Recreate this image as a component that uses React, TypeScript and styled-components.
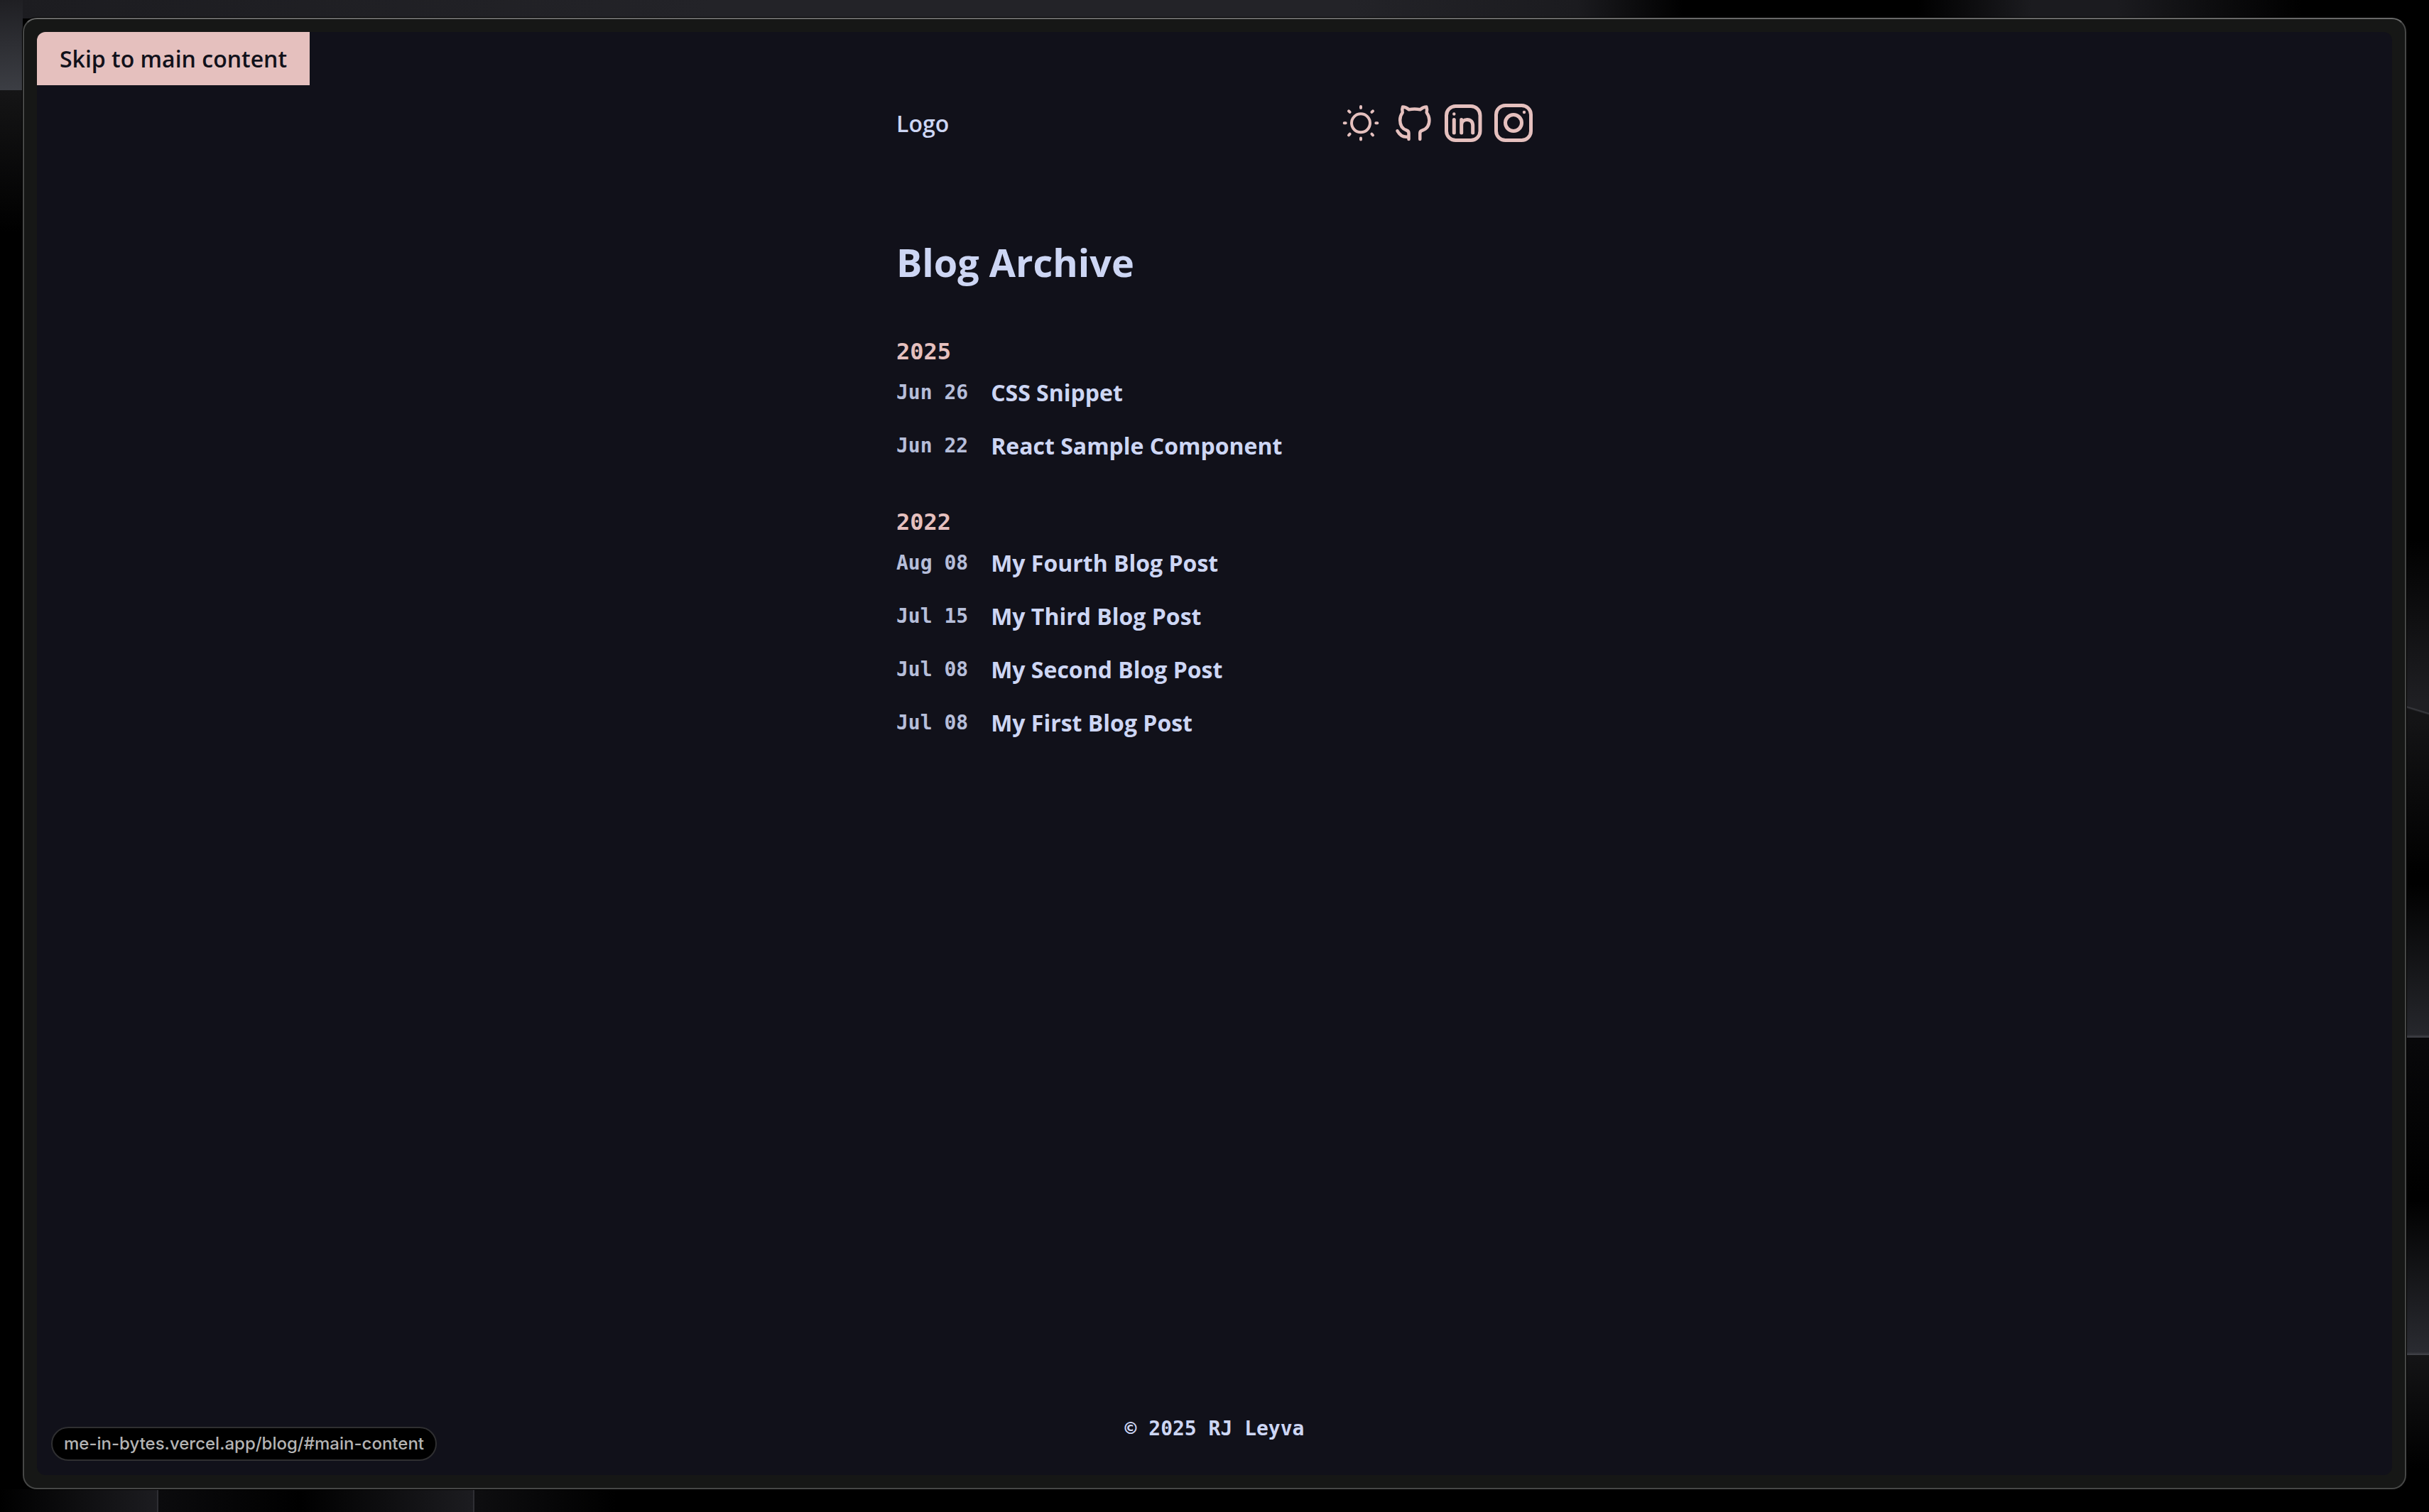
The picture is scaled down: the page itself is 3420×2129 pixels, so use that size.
import React from "react";
import styled, { createGlobalStyle } from "styled-components";

const sans = `"Open Sans", "Noto Sans", sans-serif`;
const mono = `"DejaVu Sans Mono", monospace`;
const rose = "#e5c0be";
const ink = "#11111a";
const text = "#cdd6f4";

const GlobalStyle = createGlobalStyle`
  *, *::before, *::after { box-sizing: border-box; }
  body { margin: 0; background: #000; }
`;

const Desktop = styled.div`
  display: flex;
  min-height: 100vh;
  padding: 25px 32px 32px;
  background:
    linear-gradient(#2e2e33, #2e2e33) 221px 100% / 2px 32px no-repeat,
    linear-gradient(#2e2e33, #2e2e33) 666px 100% / 2px 32px no-repeat,
    linear-gradient(90deg, #000 0, #1c1c20 222px) 0 100% / 222px 32px no-repeat,
    linear-gradient(90deg, #0b0b0d 0, #000 200px, #1c1c20 443px) 223px 100% / 443px 32px no-repeat,
    linear-gradient(90deg, #0e0e10 0, #000 200px) 668px 100% / 200px 32px no-repeat,
    linear-gradient(#1f1f23, #3c3e44) 0 0 / 32px 127px no-repeat,
    linear-gradient(#151516, #000) 0 127px / 32px 200px no-repeat,
    linear-gradient(197deg, #1f1f23 44%, #3a3b40 50%, #141416 58%) 100% 990px / 32px 20px no-repeat,
    linear-gradient(#000, #1f1f23) 100% 760px / 32px 230px no-repeat,
    linear-gradient(#141416, #000) 100% 1010px / 32px 220px no-repeat,
    linear-gradient(#000, #26272c 98%, #45464c) 100% 1245px / 32px 216px no-repeat,
    linear-gradient(#08080a, #000) 100% 1461px / 32px 220px no-repeat,
    linear-gradient(#000, #2a2b31 98%, #45464c) 100% 1690px / 32px 218px no-repeat,
    linear-gradient(#141416, #000) 100% 1908px / 32px 160px no-repeat,
    linear-gradient(90deg, #1c1c20 0, #232328 1000px, #232328 1900px, #1b1b1f 2220px, #000 2370px, #000 2700px, #1b1b1f 2860px, #1b1b1f 2980px, #000 3240px) 0 0 / 100% 26px no-repeat,
    #000;
`;

const BrowserWindow = styled.div`
  position: relative;
  display: flex;
  flex: 1;
  padding: 18px;
  border: 2px solid #464746;
  border-top-color: #686868;
  border-radius: 20px;
  background: #161716;
  box-shadow: 0 0 0 1px #000;
`;

const Page = styled.div`
  position: relative;
  display: flex;
  flex: 1;
  flex-direction: column;
  align-items: center;
  overflow: hidden;
  border-radius: 12px;
  background: ${ink};
  color: ${text};
  font-family: ${sans};
  font-size: 32px;
  line-height: 43px;
`;

const SkipLink = styled.a`
  position: absolute;
  top: 0;
  left: 0;
  padding: 16px 32px;
  background: ${rose};
  color: ${ink};
  font-weight: 600;
  text-decoration: none;
`;

const Column = styled.div`
  display: flex;
  flex: 1;
  flex-direction: column;
  width: 100%;
  max-width: 896px;
`;

const Header = styled.header`
  display: flex;
  align-items: center;
  justify-content: space-between;
  margin-top: 96px;
`;

const LogoLink = styled.a`
  color: inherit;
  font-weight: 600;
  text-decoration: none;
`;

const Actions = styled.nav`
  display: flex;
  align-items: center;
  gap: 14px;
  color: ${rose};
`;

const iconControl = `
  display: flex;
  padding: 0;
  border: 0;
  background: none;
  color: inherit;
`;

const IconButton = styled.button`${iconControl}`;
const IconLink = styled.a`${iconControl}`;

const Glyph = styled.svg`
  width: 56px;
  height: 64px;
  overflow: visible;
  fill: none;
  stroke: currentColor;
  stroke-linecap: round;
  stroke-linejoin: round;
`;

const Main = styled.main`
  display: flex;
  flex: 1;
  flex-direction: column;
`;

const Title = styled.h1`
  margin: 126px 0 68px;
  font-size: 54px;
  line-height: 76px;
  font-weight: 700;
`;

const YearGroup = styled.section`
  margin-bottom: 50px;
`;

const Year = styled.h2`
  margin: 0;
  color: ${rose};
  font: 700 32px/40px ${mono};
`;

const Posts = styled.ul`
  margin: 0;
  padding: 0;
  list-style: none;
`;

const Post = styled.li`
  display: flex;
  align-items: center;
  gap: 32px;
  height: 75px;
`;

const PostDate = styled.time`
  opacity: 0.88;
  font: 700 28px/43px ${mono};
  white-space: pre;
`;

const PostLink = styled.a`
  color: inherit;
  font-weight: 700;
  text-decoration: none;
`;

const Footer = styled.footer`
  margin-bottom: 44px;
  font: 700 28px/43px ${mono};
  text-align: center;
`;

const StatusBubble = styled.div`
  position: absolute;
  left: 20px;
  bottom: 20px;
  padding: 8px 16px;
  border: 2px solid #2f2f31;
  border-radius: 24px;
  background: #000;
  color: #b4b4b4;
  font: 500 24px/28px Inter, sans-serif;
`;

const archive = [
  {
    year: "2025",
    posts: [
      { date: "Jun 26", title: "CSS Snippet" },
      { date: "Jun 22", title: "React Sample Component" },
    ],
  },
  {
    year: "2022",
    posts: [
      { date: "Aug 08", title: "My Fourth Blog Post" },
      { date: "Jul 15", title: "My Third Blog Post" },
      { date: "Jul 08", title: "My Second Blog Post" },
      { date: "Jul 08", title: "My First Blog Post" },
    ],
  },
];

const SunIcon = () => (
  <Glyph viewBox="4 0 56 64" strokeWidth="4" aria-hidden="true">
    <circle cx="28" cy="32.300" r="13" />
    <path d="M28 9v2M28 53.500v2M4.700 32.300h2M49.300 32.300h2M11 15.300l1.600 1.600M43.400 47.700l1.600 1.600M11 49.300l1.600-1.600M43.400 16.900l1.600-1.600" />
  </Glyph>
);

const GithubIcon = () => (
  <Glyph viewBox="0 0 56 64" strokeWidth="4.500" aria-hidden="true">
    <path d="M21.500 55V46.500c0-2.200-.6-3.200-3-4C12.500 40.500 9.200 35 9.200 28c0-4.500 1.300-7.500 3.500-10.500-.8-3-.7-5.500.3-8 3.500 0 6 1.500 8.700 3.700 5-1 11-1 16 0 2.700-2.200 5.300-3.700 8.700-3.700 1 2.500 1.100 5 .3 8 2.200 3 3.700 6 3.700 10.500 0 7-3.500 12.500-9.600 14.500-2.800.8-3.500 2-3.500 4V55M21.500 51.300c-7 1.500-12-1-16-8" />
  </Glyph>
);

const LinkedinIcon = () => (
  <Glyph viewBox="0 0 56 64" strokeWidth="5" aria-hidden="true">
    <rect x="4.500" y="8.500" width="47.500" height="48" rx="13" />
    <path d="M15.300 27.500V46M25.700 27.500V46M25.700 35c0-4.500 3.500-7.500 8-7.500 5 0 8 3 8 8.500v10" />
    <circle cx="15.300" cy="19.500" r="2.200" fill="currentColor" stroke="none" />
  </Glyph>
);

const InstagramIcon = () => (
  <Glyph viewBox="0 0 56 64" strokeWidth="5" aria-hidden="true">
    <rect x="4.500" y="7.500" width="49" height="49" rx="13" />
    <circle cx="29" cy="32" r="11.500" />
    <circle cx="44" cy="17" r="2.200" fill="currentColor" stroke="none" />
  </Glyph>
);

export default function App() {
  return (
    <Desktop>
      <GlobalStyle />
      <BrowserWindow>
        <Page>
          <SkipLink href="#main-content">Skip to main content</SkipLink>
          <Column>
            <Header>
              <LogoLink href="#home">Logo</LogoLink>
              <Actions aria-label="Site links">
                <IconButton type="button" aria-label="Toggle theme"><SunIcon /></IconButton>
                <IconLink href="#github" aria-label="GitHub"><GithubIcon /></IconLink>
                <IconLink href="#linkedin" aria-label="LinkedIn"><LinkedinIcon /></IconLink>
                <IconLink href="#instagram" aria-label="Instagram"><InstagramIcon /></IconLink>
              </Actions>
            </Header>
            <Main id="main-content">
              <Title>Blog Archive</Title>
              {archive.map((group) => (
                <YearGroup key={group.year}>
                  <Year>{group.year}</Year>
                  <Posts>
                    {group.posts.map((post) => (
                      <Post key={post.title}>
                        <PostDate>{post.date}</PostDate>
                        <PostLink href="#post">{post.title}</PostLink>
                      </Post>
                    ))}
                  </Posts>
                </YearGroup>
              ))}
            </Main>
            <Footer>© 2025 RJ Leyva</Footer>
          </Column>
          <StatusBubble>me-in-bytes.vercel.app/blog/#main-content</StatusBubble>
        </Page>
      </BrowserWindow>
    </Desktop>
  );
}
